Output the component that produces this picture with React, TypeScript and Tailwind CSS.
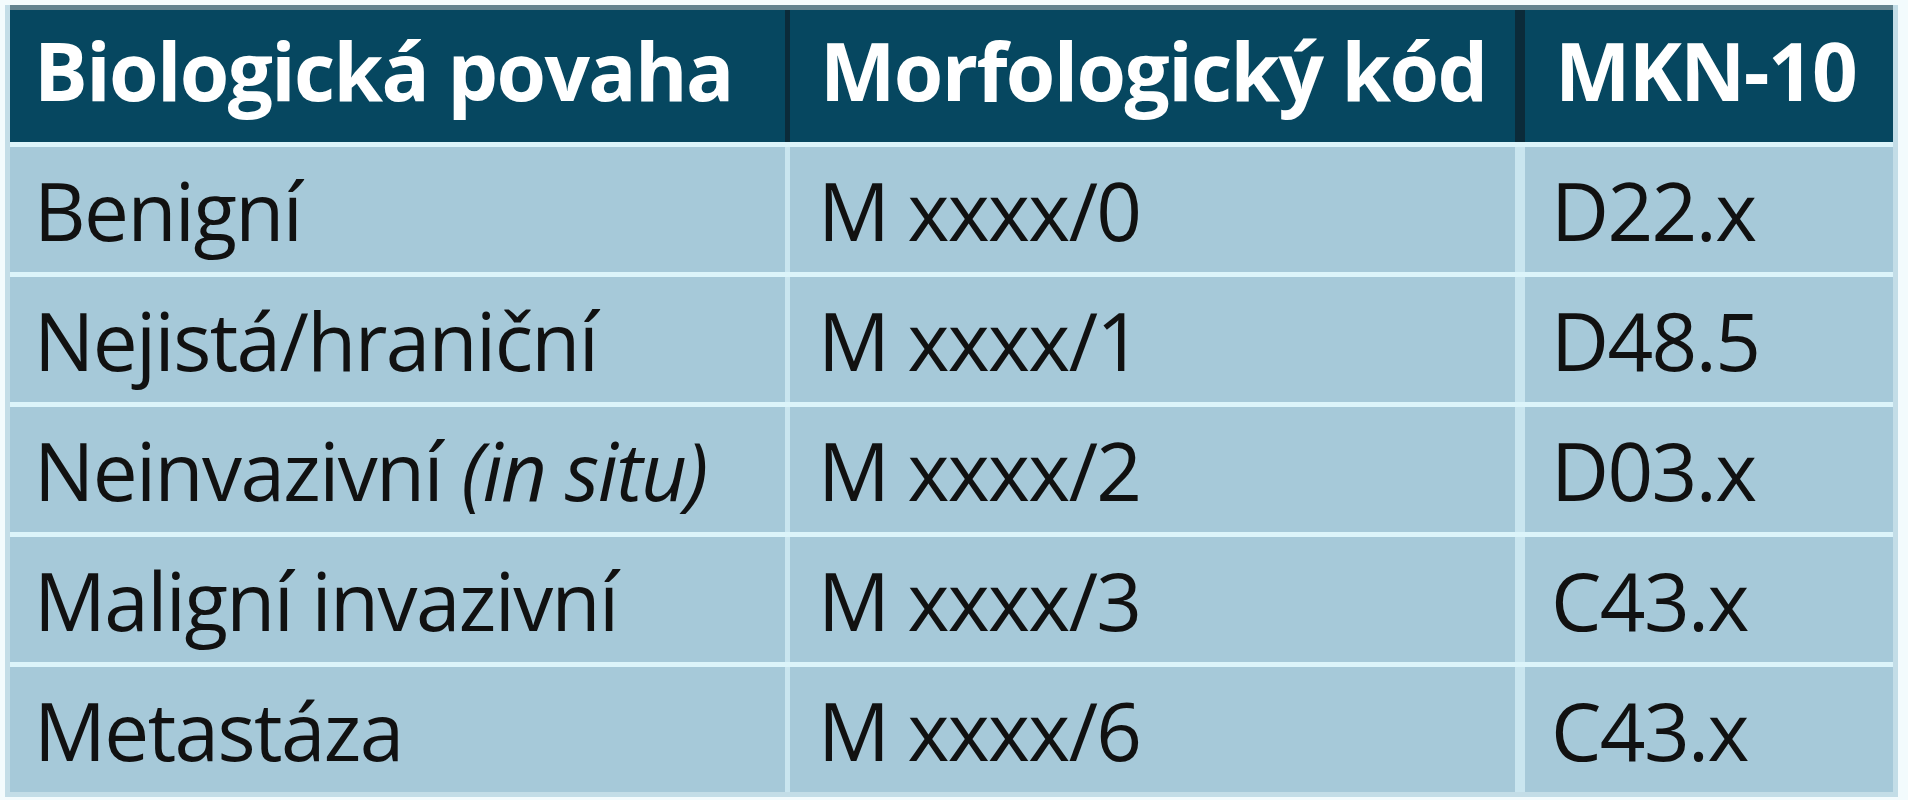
const rows: [React.ReactNode, string, string][] = [
  ["Benigní", "M xxxx/0", "D22.x"],
  ["Nejistá/hraniční", "M xxxx/1", "D48.5"],
  [
    <span>
      Neinvazivní <span className="italic">(in situ)</span>
    </span>,
    "M xxxx/2",
    "D03.x",
  ],
  ["Maligní invazivní", "M xxxx/3", "C43.x"],
  ["Metastáza", "M xxxx/6", "C43.x"],
]

export default function App() {
  return (
    <div className="w-[1908px] h-[800px] bg-[#f3fbfd] pl-[5px] pt-[5px] font-['Open_Sans',sans-serif]">
      <div className="w-[1893px] flex flex-col gap-[5px] bg-[#dcf4fa] border-l-[5px] border-r-[5px] border-b-[5px] border-[#c3dde7]">
        <div className="flex h-[137px] bg-[#0b2b3a] border-t-[5px] border-[#62838f] text-white font-bold text-[80px] tracking-[-0.02em]">
          <div className="w-[775px] bg-[#064760] flex items-center pl-[24px] pb-[12px]">Biologická povaha</div>
          <div className="w-[725px] ml-[5px] bg-[#064760] flex items-center pl-[30px] pb-[12px]">Morfologický kód</div>
          <div className="w-[368px] ml-[10px] bg-[#064760] flex items-center pl-[30px] pb-[12px]">MKN-10</div>
        </div>
        {rows.map((r, i) => (
          <div key={i} className="flex h-[125px] bg-[#c9e5ef] text-[#111] text-[80px] tracking-[-0.02em]">
            <div className="w-[775px] bg-[#a6c9d9] flex items-center pl-[24px] whitespace-nowrap">{r[0]}</div>
            <div className="w-[725px] ml-[5px] bg-[#a6c9d9] flex items-center pl-[28px]">{r[1]}</div>
            <div className="w-[368px] ml-[10px] bg-[#a6c9d9] flex items-center pl-[26px]">{r[2]}</div>
          </div>
        ))}
      </div>
    </div>
  )
}
